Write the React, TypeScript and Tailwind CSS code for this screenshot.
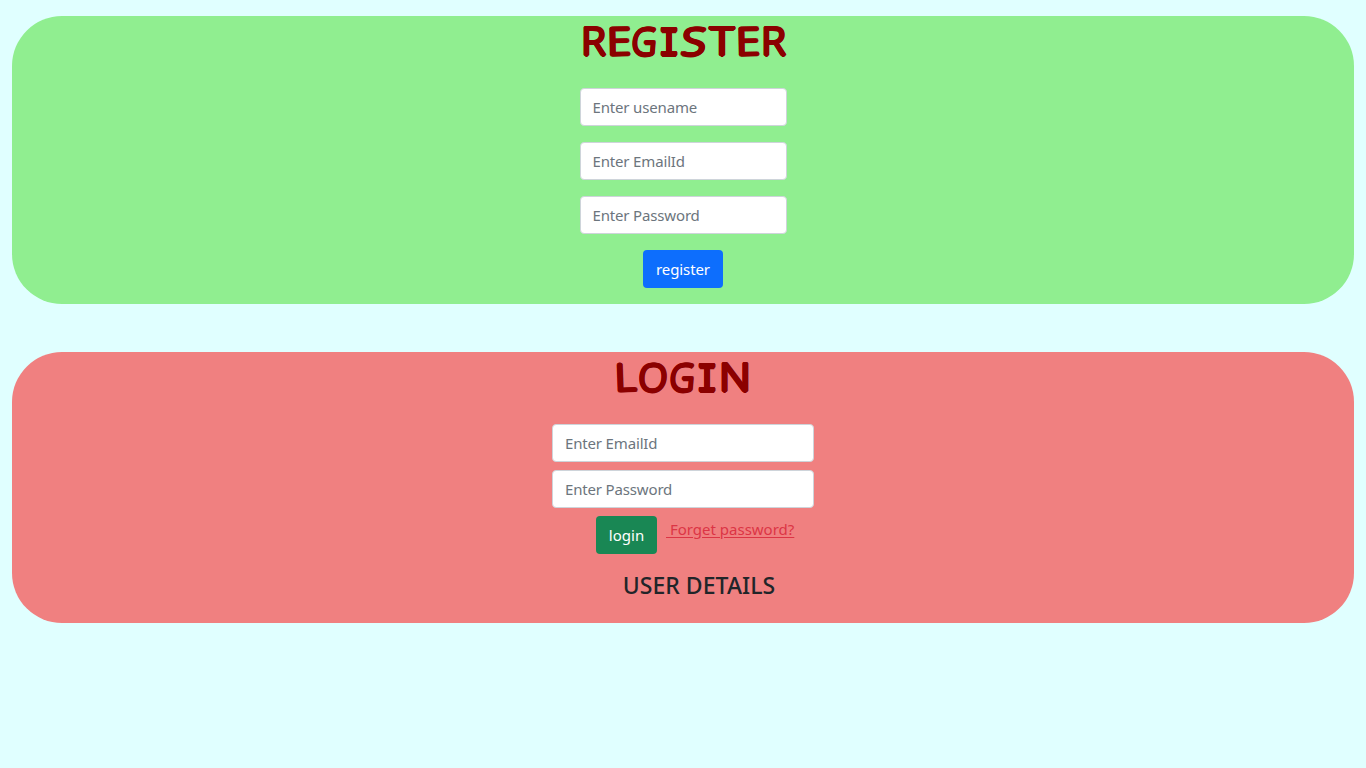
type Glyph = { char: string; style: string };

const REGISTER: Glyph[] = [
  { char: 'R', style: 'w-[27px] scale-x-108' },
  { char: 'E', style: 'w-6 rotate-[-1deg] scale-x-115' },
  { char: 'G', style: 'w-[27px] skew-x-[-5deg] scale-x-92' },
  { char: 'I', style: "w-[22px] font-['Liberation_Mono',monospace] text-[41px] scale-x-86" },
  { char: 'S', style: 'w-[28px] skew-x-[-6deg] scale-x-120' },
  { char: 'T', style: 'w-[28px] scale-x-120' },
  { char: 'E', style: 'w-6 rotate-[-1deg] scale-x-115' },
  { char: 'R', style: 'w-[27px] scale-x-108' },
];

const LOGIN: Glyph[] = [
  { char: 'L', style: 'w-[23px] rotate-[-2deg] scale-x-110' },
  { char: 'O', style: 'w-[32px] skew-x-[-3deg]' },
  { char: 'G', style: 'w-[27px] skew-x-[-5deg] scale-x-92' },
  { char: 'I', style: "w-[22px] font-['Liberation_Mono',monospace] text-[41px] scale-x-86" },
  { char: 'N', style: 'w-[34px] scale-x-115' },
];

function Title({ glyphs }: { glyphs: Glyph[] }) {
  return (
    <h1 className="flex h-[52px] items-baseline justify-center font-['Noto_Sans',sans-serif] text-[38px] leading-[49px] font-light text-[#8b0000] [text-shadow:1.5px_0_0_#8b0000,-1.5px_0_0_#8b0000,0_1.5px_0_#8b0000,0_-1.5px_0_#8b0000,1.1px_1.1px_0_#8b0000,-1.1px_1.1px_0_#8b0000,1.1px_-1.1px_0_#8b0000,-1.1px_-1.1px_0_#8b0000]">
      {glyphs.map((glyph, i) => (
        <span key={i} className={`flex justify-center ${glyph.style}`}>{glyph.char}</span>
      ))}
    </h1>
  );
}

function Field({ label, type = 'text' }: { label: string; type?: string }) {
  return (
    <input
      type={type}
      placeholder={label}
      className="block h-[38px] w-full rounded border border-[#ced4da] bg-white px-3 text-[15px] leading-6 tracking-[-0.16px] text-[#212529] outline-none placeholder:text-[#6c757d]"
    />
  );
}

export default function App() {
  return (
    <main className="min-h-screen bg-[#e0ffff] px-3 pt-4 font-['Noto_Sans',sans-serif] text-[#212529]">
      <section className="flex h-[288px] flex-col items-center rounded-[50px] bg-[#90ee90]">
        <Title glyphs={REGISTER} />
        <form className="mt-5 flex w-[207px] flex-col items-center gap-4">
          <Field label="Enter usename" />
          <Field label="Enter EmailId" />
          <Field label="Enter Password" type="password" />
          <button type="button" className="h-[38px] w-20 rounded bg-[#0d6efd] text-[15px] leading-6 tracking-[-0.1px] text-white">register</button>
        </form>
      </section>

      <section className="mt-12 flex h-[271px] flex-col items-center rounded-[50px] bg-[#f08080]">
        <Title glyphs={LOGIN} />
        <form className="mt-5 flex w-[262px] flex-col gap-2">
          <Field label="Enter EmailId" />
          <Field label="Enter Password" type="password" />
          <div className="flex pl-11">
            <button type="button" className="h-[38px] w-[61px] rounded bg-[#198754] text-[15px] leading-6 text-white">login</button>
            <a href="#" className="ml-[9px] pt-px text-[15px] leading-6 whitespace-pre text-[#dc3545] underline underline-offset-2"> Forget password?</a>
          </div>
        </form>
        <h4 className="mt-[17px] ml-8 text-[23px] leading-[29px] font-medium tracking-[0.05px]">USER DETAILS</h4>
      </section>
    </main>
  );
}
